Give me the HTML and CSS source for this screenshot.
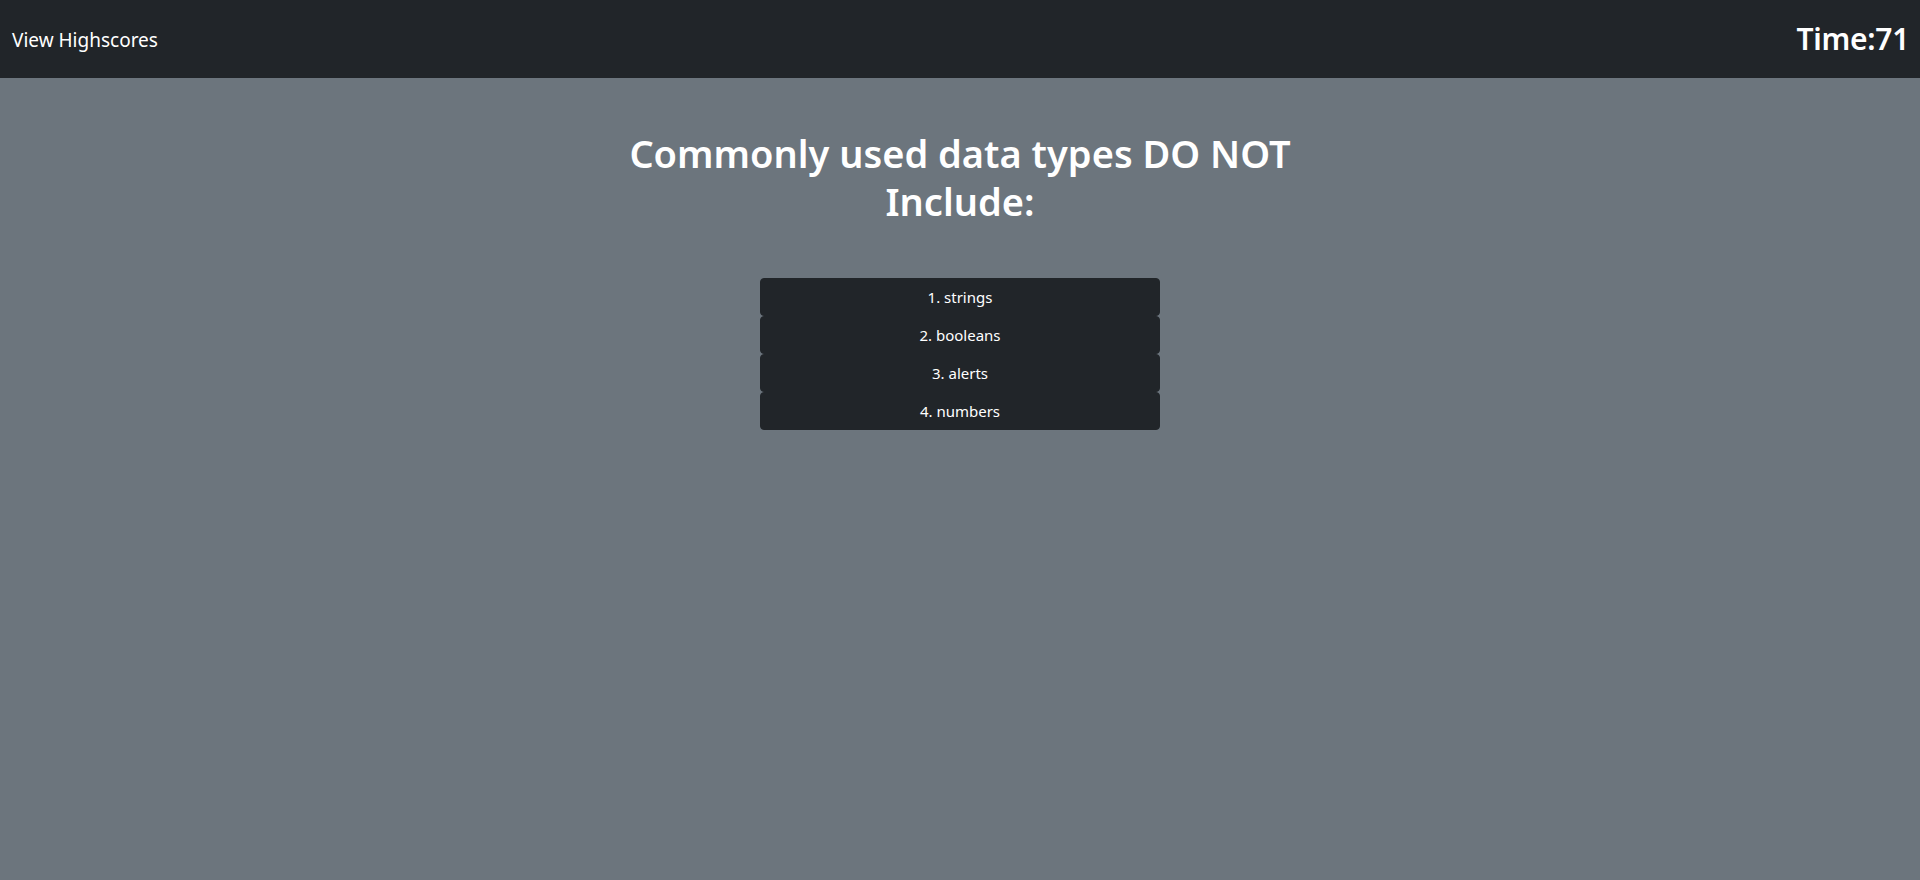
FILE: index.html
```html
<!DOCTYPE html>
<html lang="en">
<head>
<meta charset="utf-8">
<title>Code Quiz</title>
<link rel="stylesheet" href="styles.css">
</head>
<body>
<header class="topbar">
  <a class="highscores" href="#">View Highscores</a>
  <div class="timer">Time:71</div>
</header>
<main class="quiz">
  <h1 class="question">Commonly used data types DO NOT Include:</h1>
  <div class="answers">
    <button class="answer">1. strings</button>
    <button class="answer">2. booleans</button>
    <button class="answer">3. alerts</button>
    <button class="answer">4. numbers</button>
  </div>
</main>
</body>
</html>
```
FILE: styles.css
```css
html, body {
  margin: 0;
  padding: 0;
}
body {
  background: #6c757d;
  color: #fff;
  font-family: "Noto Sans", "Open Sans", sans-serif;
  min-height: 880px;
}
.topbar {
  background: #212529;
  height: 78px;
  box-sizing: border-box;
  display: flex;
  align-items: center;
  justify-content: space-between;
  padding: 0 11px 0 12px;
}
.highscores {
  color: #fff;
  text-decoration: none;
  font-size: 19px;
  margin-top: 2px;
}
.timer {
  font-size: 30px;
  font-weight: 600;
  line-height: 1.2;
  letter-spacing: -0.3px;
}
.quiz {
  display: flex;
  flex-direction: column;
  align-items: center;
  padding-top: 51px;
}
.question {
  margin: 0;
  max-width: 720px;
  text-align: center;
  font-size: 38px;
  font-weight: 600;
  line-height: 48px;
}
.answers {
  margin-top: 53px;
  width: 400px;
  display: flex;
  flex-direction: column;
}
.answer {
  background: #212529;
  color: #fff;
  border: 1px solid #212529;
  border-radius: 4px;
  font-family: inherit;
  font-size: 15px;
  line-height: 24px;
  padding: 6px 12px;
  text-align: center;
  cursor: pointer;
}
```
